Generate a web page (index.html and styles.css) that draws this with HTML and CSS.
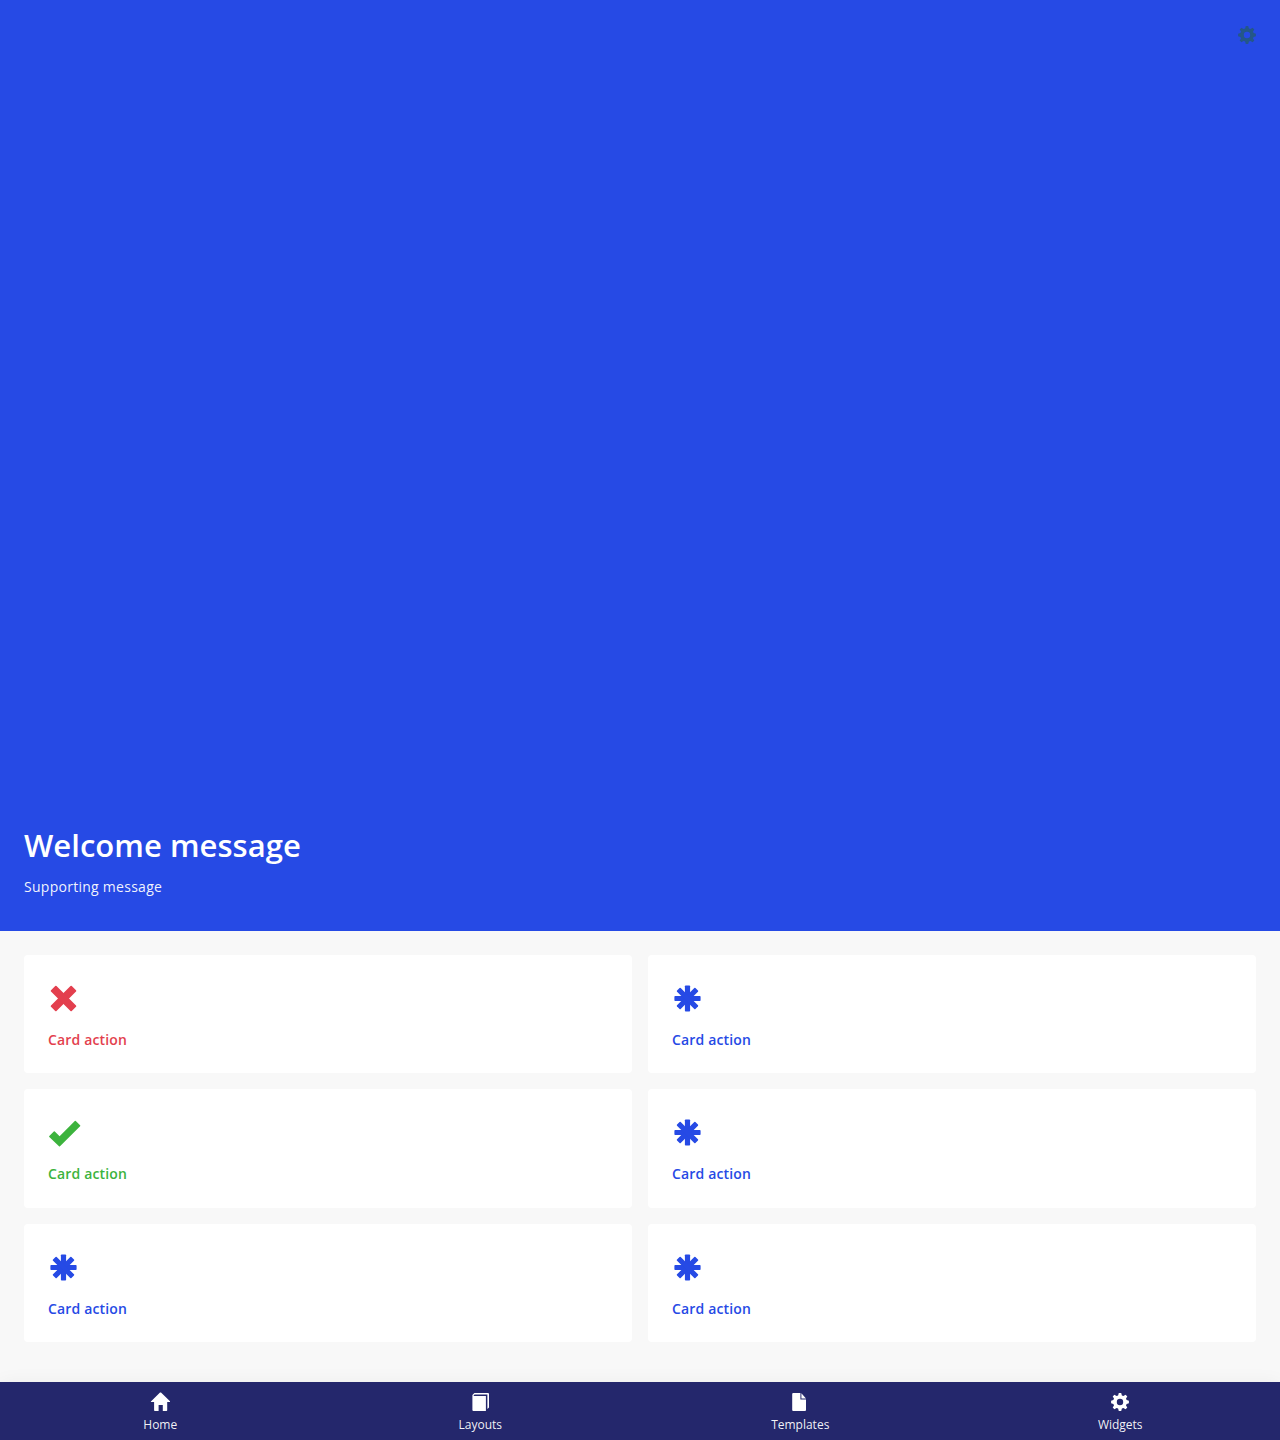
FILE: index.html
```html
<!DOCTYPE html>
<html lang="en">
<head>
<meta charset="utf-8">
<title>Home</title>
<link rel="stylesheet" href="styles.css">
</head>
<body>
<svg class="sprite" aria-hidden="true">
  <symbol id="gear" viewBox="0 0 18 18">
    <path fill-rule="evenodd" d="M7.8 .1H10.2L10.9 2.4L12.4 3L14.6 1.7L16.3 3.4L15 5.6L15.6 7.1L17.9 7.8V10.2L15.6 10.9L15 12.4L16.3 14.6L14.6 16.3L12.4 15L10.9 15.6L10.2 17.9H7.8L7.1 15.6L5.6 15L3.4 16.3L1.7 14.6L3 12.4L2.4 10.9L.1 10.2V7.8L2.4 7.1L3 5.6L1.7 3.4L3.4 1.7L5.6 3L7.1 2.4ZM9 5.8a3.2 3.2 0 1 0 0 6.4a3.2 3.2 0 1 0 0-6.4Z"/>
  </symbol>
  <symbol id="asterisk" viewBox="0 0 36 40">
    <g transform="translate(15.5 19.5)">
      <rect x="-2.6" y="-13.1" width="5.2" height="26.2" rx=".8"/>
      <rect x="-13.1" y="-2.6" width="26.2" height="5.2" rx=".8"/>
      <rect x="-2.6" y="-13" width="5.2" height="26" rx=".8" transform="rotate(45)"/>
      <rect x="-2.6" y="-13" width="5.2" height="26" rx=".8" transform="rotate(-45)"/>
    </g>
  </symbol>
  <symbol id="cross" viewBox="0 0 36 40">
    <g transform="translate(15.5 19.5) rotate(45)">
      <rect x="-3.9" y="-14.7" width="7.8" height="29.4" rx=".9"/>
      <rect x="-14.7" y="-3.9" width="29.4" height="7.8" rx=".9"/>
    </g>
  </symbol>
  <symbol id="check" viewBox="0 0 36 40">
    <path transform="translate(0 .8)" d="M1.3 22.3L5.8 17.8Q6.3 17.3 6.8 17.8L11.6 22.4L26.8 7.2Q27.3 6.7 27.8 7.2L32.1 11.5Q32.6 12 32.1 12.5L12 32.5Q11.5 33 11 32.5L1.3 23.2Q.8 22.8 1.3 22.3Z"/>
  </symbol>
  <symbol id="home" viewBox="0 0 20 20">
    <path d="M10 .6Q10.5 .2 11 .6L20.1 9.4Q20.3 10 19.6 10H17.2V18.3Q17.2 19 16.5 19H12.8V13H8.6V19H4.8Q4.1 19 4.1 18.3V10H1.3Q.6 10 .9 9.4Z"/>
  </symbol>
  <symbol id="layouts" viewBox="0 0 20 20">
    <path d="M2.4 4H15.9V19H3.4Q2.4 19 2.4 18ZM2.4 3L4.4 1H18Q19 1 19 2V15.5L17.4 17V2.6H4.5L3.4 4H2.4Z"/>
  </symbol>
  <symbol id="templates" viewBox="0 0 20 20">
    <path d="M3.2 1H10.4V7.6H16V18Q16 19 15 19H3.2Q2.2 19 2.2 18V2Q2.2 1 3.2 1ZM11.4 1.2L16 6.4H11.4Z"/>
  </symbol>
</svg>
<main class="page">
  <header class="hero">
    <svg class="hero-settings"><use href="#gear"/></svg>
    <div class="hero-text">
      <h1>Welcome message</h1>
      <p>Supporting message</p>
    </div>
  </header>
  <section class="cards">
    <a class="card danger"><svg class="card-icon"><use href="#cross"/></svg><span>Card action</span></a>
    <a class="card"><svg class="card-icon"><use href="#asterisk"/></svg><span>Card action</span></a>
    <a class="card success"><svg class="card-icon"><use href="#check"/></svg><span>Card action</span></a>
    <a class="card"><svg class="card-icon"><use href="#asterisk"/></svg><span>Card action</span></a>
    <a class="card"><svg class="card-icon"><use href="#asterisk"/></svg><span>Card action</span></a>
    <a class="card"><svg class="card-icon"><use href="#asterisk"/></svg><span>Card action</span></a>
  </section>
  <nav class="tabs">
    <a class="tab"><svg class="tab-icon"><use href="#home"/></svg><span>Home</span></a>
    <a class="tab"><svg class="tab-icon"><use href="#layouts"/></svg><span>Layouts</span></a>
    <a class="tab"><svg class="tab-icon"><use href="#templates"/></svg><span>Templates</span></a>
    <a class="tab"><svg class="tab-icon"><use href="#gear" x="1" y="1" width="18" height="18"/></svg><span>Widgets</span></a>
  </nav>
</main>
</body>
</html>
```
FILE: styles.css
```css
* { box-sizing: border-box; }
body {
  margin: 0;
  font-family: "Open Sans", sans-serif;
  font-size: 14px;
  background: #f8f8f8;
}
svg { display: block; flex-shrink: 0; fill: currentColor; }
.sprite { display: none; }
.page { display: flex; flex-direction: column; height: 1440px; }
.hero {
  display: flex;
  flex-direction: column;
  justify-content: space-between;
  height: 931px;
  padding: 26px 24px 34px;
  background: #264ae5;
  color: #fff;
}
.hero-settings { width: 18px; height: 18px; align-self: flex-end; color: #245788; }
.hero h1 { margin: 0 0 12px; font-size: 31px; line-height: 40px; font-weight: 600; letter-spacing: .04px; }
.hero p { margin: 0; line-height: 20px; letter-spacing: .27px; color: rgba(255, 255, 255, .95); }
.cards {
  display: grid;
  grid-template-columns: 1fr 1fr;
  grid-auto-rows: 118.4px;
  gap: 16px;
  padding: 24px;
  flex: 1;
}
.card {
  display: flex;
  flex-direction: column;
  padding: 24px 24px 20px;
  border-radius: 4px;
  background: #fff;
  color: #264ae5;
  font-weight: 600;
  letter-spacing: .16px;
}
.card span { margin-top: 11px; line-height: 20px; }
.card-icon { width: 36px; height: 40px; }
.danger { color: #e33f4e; }
.success { color: #3cb33d; }
.tabs {
  display: grid;
  grid-template-columns: repeat(4, 1fr);
  height: 58px;
  background: #24276c;
  color: #fff;
  box-shadow: 0 2px 20px rgba(0, 0, 0, .06);
}
.tab { display: flex; flex-direction: column; align-items: center; padding-top: 10px; font-size: 12px; }
.tab-icon { width: 20px; height: 20px; }
.tab span { margin-top: 5px; padding-left: .5px; line-height: 16px; color: rgba(255, 255, 255, .95); }
```
